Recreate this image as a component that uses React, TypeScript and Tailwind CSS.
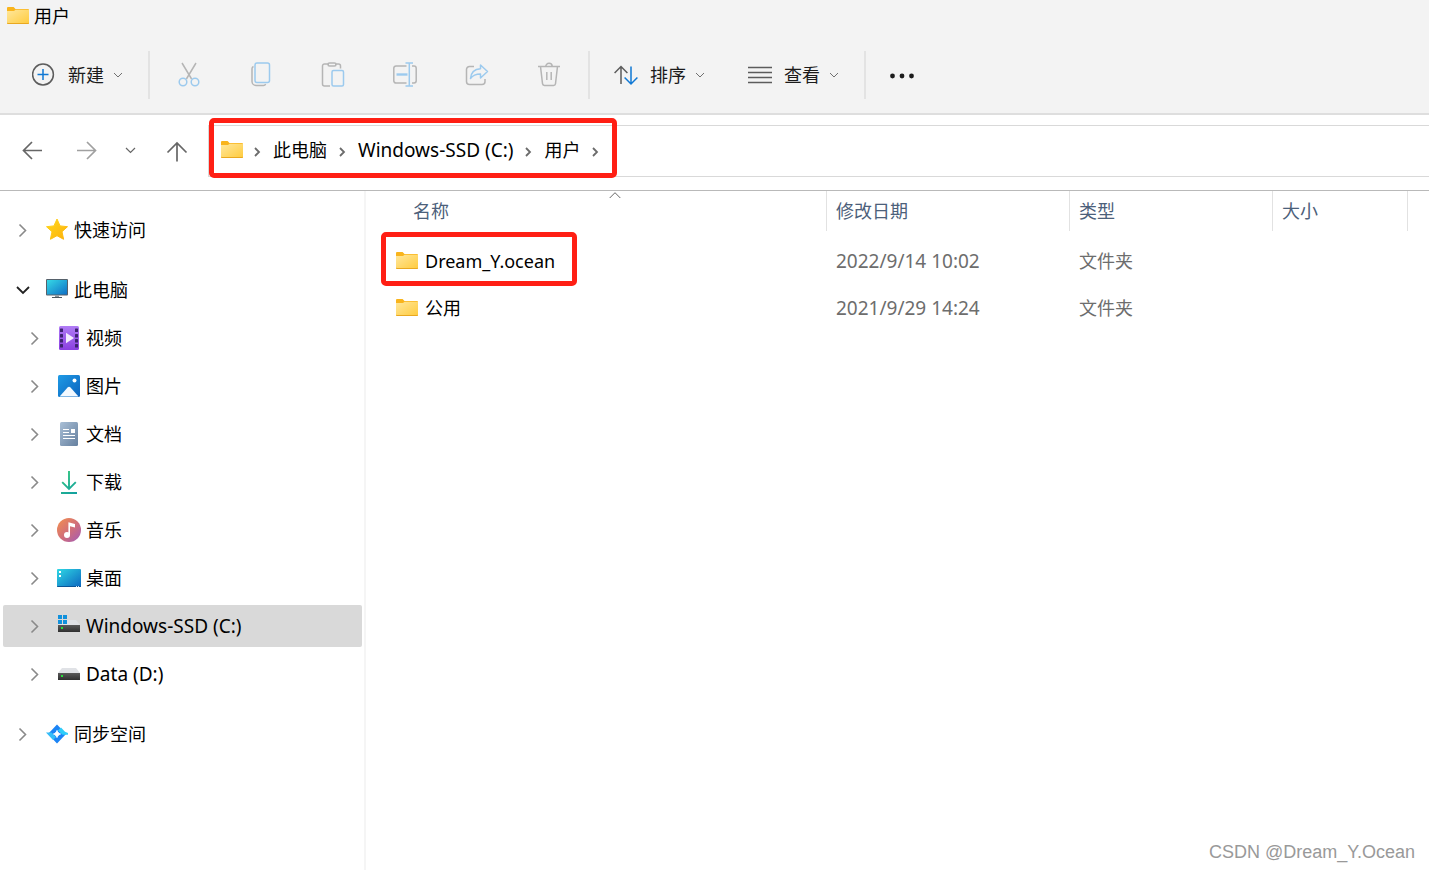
import type { ReactNode } from 'react';
import clsx from 'clsx';

type IconProps = { className?: string };

function FolderIcon() {
  return (
    <svg width="24" height="24" viewBox="0 0 24 24" className="shrink-0" aria-hidden="true">
      <defs>
        <linearGradient id="folder" x1="0" y1="0" x2="1" y2="1">
          <stop offset="0" stopColor="#ffe79c" />
          <stop offset="1" stopColor="#ffcb3d" />
        </linearGradient>
      </defs>
      <path d="M1 4a1 1 0 0 1 1-1h5.6l1.9 2H22a1 1 0 0 1 1 1v3H1z" fill="#f9b41c" />
      <path d="M1 7h7l1.6-1.2H23V19a1 1 0 0 1-1 1H2a1 1 0 0 1-1-1z" fill="url(#folder)" />
      <path d="M1 18.6V19a1 1 0 0 0 1 1h20a1 1 0 0 0 1-1v-.4a1 1 0 0 1-.6.4H1.6a1 1 0 0 1-.6-.4z" fill="#e9a820" />
    </svg>
  );
}

function ChevronDown({ className }: IconProps) {
  return (
    <svg width="12" height="12" viewBox="0 0 12 12" fill="none" stroke="currentColor" className={className} aria-hidden="true">
      <path d="M2 4l4 4 4-4" />
    </svg>
  );
}

function CrumbChevron() {
  return (
    <svg width="12" height="12" viewBox="0 0 12 12" fill="none" stroke="#6b6b6b" strokeWidth="1.8" className="mt-1 shrink-0" aria-hidden="true">
      <path d="M4 2l4 4-4 4" />
    </svg>
  );
}

function TreeChevron({ open }: { open?: boolean }) {
  return (
    <svg
      width="24"
      height="24"
      viewBox="0 0 24 24"
      fill="none"
      stroke={open ? '#222' : '#8a8a8a'}
      strokeWidth={open ? 1.8 : 1.6}
      className="shrink-0"
      aria-hidden="true"
    >
      <path d={open ? 'M6 9l6 6 6-6' : 'M8.500 6.500l6 6-6 6'} />
    </svg>
  );
}

function StarIcon() {
  return (
    <>
      <defs>
        <linearGradient id="star" x1="0" y1="0" x2="1" y2="1">
          <stop offset="0" stopColor="#ffd91f" />
          <stop offset="1" stopColor="#fdb00a" />
        </linearGradient>
      </defs>
      <path
        d="M12 1l3.100 6.900 7.400.8-5.500 5 1.600 7.600L12 17.700l-6.600 3.600L7 13.700l-5.500-5 7.400-.8z"
        fill="url(#star)"
        stroke="url(#star)"
        strokeLinejoin="round"
      />
    </>
  );
}

function ComputerIcon() {
  return (
    <>
      <defs>
        <linearGradient id="screen" x1="0" y1="0" x2="1" y2="1">
          <stop offset="0" stopColor="#35d9e6" />
          <stop offset="1" stopColor="#0f6fc6" />
        </linearGradient>
      </defs>
      <rect x="1" y="1" width="22" height="16.500" rx="1" fill="#56616b" />
      <rect x="2" y="2" width="20" height="14.500" fill="url(#screen)" />
      <path d="M10 17.500h4v1.500h-4z" fill="#8b949b" />
      <path d="M7 19h10v1H7z" fill="#4c565e" />
    </>
  );
}

function VideoIcon() {
  return (
    <>
      <defs>
        <linearGradient id="film" x1="0" y1="0" x2="0" y2="1">
          <stop offset="0" stopColor="#b07cf5" />
          <stop offset="1" stopColor="#8a3fe0" />
        </linearGradient>
      </defs>
      <rect x="2" y="0" width="20" height="24" rx="1.500" fill="url(#film)" />
      {[2.5, 8, 13, 18].map(y => (
        <g key={y} fill="#3d2270">
          <rect x="3" y={y} width="3" height="3.400" rx="0.500" />
          <rect x="18" y={y} width="3" height="3.400" rx="0.500" />
        </g>
      ))}
      <path d="M9 6.800l8 5.200-8 5.200z" fill="#f3ecfd" />
    </>
  );
}

function PictureIcon() {
  return (
    <>
      <defs>
        <linearGradient id="photo" x1="0" y1="0" x2="1" y2="1">
          <stop offset="0" stopColor="#1e9be6" />
          <stop offset="1" stopColor="#0d63bd" />
        </linearGradient>
      </defs>
      <rect x="1" y="1" width="22" height="22" rx="1.500" fill="url(#photo)" />
      <path d="M2.600 22.400l8-8.800a2 2 0 0 1 2.900 0l8 8.800z" fill="#f3f9ff" />
      <circle cx="17.500" cy="6.500" r="2" fill="#fff" />
    </>
  );
}

function DocumentIcon() {
  return (
    <>
      <defs>
        <linearGradient id="doc" x1="0" y1="0" x2="1" y2="1">
          <stop offset="0" stopColor="#a9bfd6" />
          <stop offset="1" stopColor="#66809f" />
        </linearGradient>
      </defs>
      <rect x="3" y="0" width="18" height="24" rx="1.500" fill="url(#doc)" />
      <path d="M6 7.500h6M6 10.500h6M6 13.500h12M6 16.500h12" stroke="#fff" />
      <rect x="14" y="7" width="4" height="4" fill="#fff" />
    </>
  );
}

function DownloadIcon() {
  return (
    <>
      <defs>
        <linearGradient id="down" gradientUnits="userSpaceOnUse" x1="4" y1="1" x2="20" y2="23">
          <stop offset="0" stopColor="#35c97c" />
          <stop offset="1" stopColor="#12a0a0" />
        </linearGradient>
      </defs>
      <path d="M12 1v18M5.200 12.200L12 19l6.800-6.800M4 23h16" fill="none" stroke="url(#down)" strokeWidth="1.900" />
    </>
  );
}

function MusicIcon() {
  return (
    <>
      <defs>
        <linearGradient id="music" x1="0" y1="0" x2="1" y2="1">
          <stop offset="0.1" stopColor="#ee8a55" />
          <stop offset="0.55" stopColor="#cf6d7c" />
          <stop offset="1" stopColor="#a15bb8" />
        </linearGradient>
      </defs>
      <circle cx="12" cy="12" r="12" fill="url(#music)" />
      <circle cx="10" cy="17" r="3" fill="#fff" />
      <path d="M11.400 4.200L18 6v3.600l-5-1.400V17h-1.600z" fill="#fff" />
    </>
  );
}

function DesktopIcon() {
  return (
    <>
      <defs>
        <linearGradient id="desk" x1="0" y1="0" x2="1" y2="1">
          <stop offset="0" stopColor="#2fd8e4" />
          <stop offset="1" stopColor="#0c66c0" />
        </linearGradient>
      </defs>
      <rect x="0" y="3" width="24" height="18" rx="1" fill="url(#desk)" />
      <path d="M2 5h2v2H2zM2 9h2v2H2z" fill="#fff" />
      <path d="M0 20h24a1 1 0 0 1-1 1H1a1 1 0 0 1-1-1z" fill="#0b5596" />
      <path d="M19 20h1v1h-1zM21 20h1v1h-1z" fill="#cfe6f7" />
    </>
  );
}

function DriveShape() {
  return (
    <>
      <defs>
        <linearGradient id="drive" x1="0" y1="0" x2="0" y2="1">
          <stop offset="0" stopColor="#5a5a5a" />
          <stop offset="1" stopColor="#2f2f2f" />
        </linearGradient>
      </defs>
      <path d="M5 6h14l4 5H1z" fill="#e0e2e6" />
      <rect x="1" y="11" width="22" height="7" fill="url(#drive)" />
      <rect x="4" y="13" width="2" height="2" fill="#25e03b" />
    </>
  );
}

function SystemDriveIcon() {
  return (
    <>
      <DriveShape />
      <rect x="1" y="1" width="9" height="9" fill="#d9d9d9" />
      <path d="M1 1h4v4H1zM6 1h4v4H6zM1 6h4v4H1zM6 6h4v4H6z" fill="#1191dc" />
    </>
  );
}

function SyncIcon() {
  return (
    <>
      <path d="M12 2.500L21 12l-9 9.500L3 12z" fill="#1b84f5" strokeLinejoin="round" />
      <path d="M1 10.500h5.500l4.500 4.500-3 3z" fill="#35bdf8" />
      <path d="M23 12.800h-5.500L13 8.500l3-3 4 4.300 3 1.200z" fill="#2fcdf9" />
      <path d="M12 8.500c.7 1.800 1.700 2.800 3.500 3.500-1.800.7-2.800 1.700-3.500 3.500-.7-1.800-1.700-2.800-3.500-3.500 1.800-.7 2.800-1.700 3.500-3.500z" fill="#fff" stroke="#fff" />
    </>
  );
}

type TreeNode = { label: string; icon: ReactNode; open?: boolean; drive?: boolean; selected?: boolean; children?: TreeNode[] };

const TREE: TreeNode[] = [
  { label: '快速访问', icon: <StarIcon /> },
  {
    label: '此电脑',
    icon: <ComputerIcon />,
    open: true,
    children: [
      { label: '视频', icon: <VideoIcon /> },
      { label: '图片', icon: <PictureIcon /> },
      { label: '文档', icon: <DocumentIcon /> },
      { label: '下载', icon: <DownloadIcon /> },
      { label: '音乐', icon: <MusicIcon /> },
      { label: '桌面', icon: <DesktopIcon /> },
      { label: 'Windows-SSD (C:)', icon: <SystemDriveIcon />, drive: true, selected: true },
      { label: 'Data (D:)', icon: <DriveShape />, drive: true },
    ],
  },
  { label: '同步空间', icon: <SyncIcon /> },
];

const FILES = [
  { name: 'Dream_Y.ocean', date: '2022/9/14 10:02', type: '文件夹', marked: true },
  { name: '公用', date: '2021/9/29 14:24', type: '文件夹', marked: false },
];

const CRUMBS = [
  { label: '此电脑' },
  { label: 'Windows-SSD (C:)', drive: true },
  { label: '用户' },
];

const FILE_ACTIONS = [
  {
    label: '剪切',
    icon: (
      <>
        <path d="M5 1l9.600 16M19 1L9.400 17" stroke="#b5b5b5" />
        <circle cx="6" cy="20" r="3.800" />
        <circle cx="18" cy="20" r="3.800" />
      </>
    ),
  },
  {
    label: '复制',
    icon: (
      <>
        <path d="M4.500 4.500a2.500 2.500 0 0 0-1.500 2.500v12.500a4 4 0 0 0 4 4h7.500a2.500 2.500 0 0 0 2.200-1.300" stroke="#b5b5b5" />
        <rect x="6" y="1" width="14.500" height="19.500" rx="2" />
      </>
    ),
  },
  {
    label: '粘贴',
    icon: (
      <>
        <path d="M8 2H3.500a2 2 0 0 0-2 2v18a2 2 0 0 0 2 2H9M14 2h3.500a2 2 0 0 1 2 2v2.500" stroke="#b5b5b5" />
        <rect x="7" y="1" width="8" height="3" rx="1.500" stroke="#b5b5b5" />
        <rect x="11" y="8.500" width="11.500" height="15.500" rx="1.500" />
      </>
    ),
  },
  {
    label: '重命名',
    icon: (
      <>
        <path d="M13.500 4H3a2.200 2.200 0 0 0-2.200 2.200v12.600A2.200 2.200 0 0 0 3 21h10.500M19 4h2a2.200 2.200 0 0 1 2.200 2.200v12.600A2.200 2.200 0 0 1 21 21h-2" stroke="#b5b5b5" />
        <path d="M3.500 12.500h11" strokeWidth="2.400" />
        <path d="M16.300 1v23M12.500 1H20M12.500 24H20" />
      </>
    ),
  },
  {
    label: '共享',
    icon: (
      <>
        <path d="M9 4.500H4.500a3 3 0 0 0-3 3v12a3 3 0 0 0 3 3h12.500a3 3 0 0 0 3-3V17" stroke="#b5b5b5" />
        <path d="M15.500 3l7 6.500-7 6.500v-4c-4.500 0-7.500 1-10 4.500.5-5.500 4-9.500 10-9.800z" strokeLinejoin="round" />
      </>
    ),
  },
  {
    label: '删除',
    icon: (
      <g stroke="#b5b5b5">
        <path d="M1 4.500h22M3.500 4.500l2 17.200a2 2 0 0 0 2 1.800h9a2 2 0 0 0 2-1.800l2-17.200" />
        <path d="M8.800 4.500a3.200 3.200 0 0 1 6.400 0M9.800 10v8M14.200 10v8" />
      </g>
    ),
  },
];

function Divider() {
  return <div className="h-12 w-0.5 shrink-0 bg-[#e3e3e3]" />;
}

function MenuButton({ label, icon }: { label: string; icon: ReactNode }) {
  return (
    <button className="flex shrink-0 items-center">
      <svg width="24" height="24" viewBox="0 0 24 24" fill="none" strokeWidth="1.500" className="mr-3" aria-hidden="true">
        {icon}
      </svg>
      {label}
      <ChevronDown className="ml-2 text-[#707070]" />
    </button>
  );
}

function Toolbar() {
  return (
    <div className="flex h-[79px] items-center border-b-2 border-[#dedede] pl-8 text-[#1b1b1b]">
      <MenuButton
        label="新建"
        icon={
          <>
            <circle cx="11" cy="11.500" r="10.400" stroke="#5c5c5c" />
            <path d="M11 6v11M5.500 11.500h11" stroke="#0f78d4" />
          </>
        }
      />
      <div className="w-6" />
      <Divider />
      <div className="mx-[3px] flex">
        {FILE_ACTIONS.map(action => (
          <button key={action.label} aria-label={action.label} className="flex h-12 w-[72px] items-center justify-center">
            <svg width="24" height="26" viewBox="0 0 24 26" fill="none" stroke="#9ccaee" strokeWidth="1.500" aria-hidden="true">
              {action.icon}
            </svg>
          </button>
        ))}
      </div>
      <Divider />
      <div className="flex gap-[42px] px-6">
        <MenuButton
          label="排序"
          icon={
            <>
              <path d="M7 21V3.500M.6 10L7 3.500l6.400 6.500" stroke="#5c5c5c" />
              <path d="M17 3.500V21M10.600 14.500L17 21l6.400-6.500" stroke="#0f78d4" />
            </>
          }
        />
        <MenuButton label="查看" icon={<path d="M0 4.500h24M0 9.500h24M0 14.500h24M0 19.500h24" stroke="#5c5c5c" />} />
      </div>
      <Divider />
      <button aria-label="查看更多" className="ml-6">
        <svg width="24" height="24" viewBox="0 0 24 24" fill="#1b1b1b" aria-hidden="true">
          <circle cx="2.500" cy="13" r="2.400" />
          <circle cx="12" cy="13" r="2.400" />
          <circle cx="21.500" cy="13" r="2.400" />
        </svg>
      </button>
    </div>
  );
}

function NavButton({ label, children }: { label: string; children: ReactNode }) {
  return (
    <button aria-label={label}>
      <svg width="24" height="24" viewBox="0 0 24 24" fill="none" stroke="#666" strokeWidth="1.700" aria-hidden="true">
        {children}
      </svg>
    </button>
  );
}

function AddressRow() {
  return (
    <div className="flex h-[76px] items-start border-b border-[#b9b9b9] bg-white pt-[10px] pl-5">
      <nav aria-label="导航" className="flex h-[52px] w-[188px] shrink-0 items-center">
        <NavButton label="后退">
          <path d="M22 11.500H3.500M12 3L3.500 11.500 12 20" />
        </NavButton>
        <div className="w-[30px]" />
        <NavButton label="前进">
          <path d="M3 11.500h18.500M13 3l8.500 8.500L13 20" stroke="#a0a0a0" />
        </NavButton>
        <button aria-label="最近浏览的位置" className="mr-7 ml-[27px]">
          <svg width="12" height="12" viewBox="0 0 12 12" fill="none" stroke="#666" strokeWidth="1.200" aria-hidden="true">
            <path d="M1 3L5.500 7.500 10 3" />
          </svg>
        </button>
        <NavButton label="向上">
          <path d="M12 22.500V4M2.500 13.500L12 4l9.500 9.500" />
        </NavButton>
      </nav>
      <div className="flex h-[52px] flex-1 items-center border-y border-l border-[#d9d9d9]">
        <div className="relative flex h-full items-center pr-4 pb-[2px] pl-[11px]">
          <FolderIcon />
          <ol className="flex items-center pl-[7px]">
            <li className="mr-[10px]">
              <CrumbChevron />
            </li>
            {CRUMBS.map(crumb => (
              <li key={crumb.label} className="flex items-center gap-[9px] pr-[10px] whitespace-nowrap last:pr-0">
                <a href="#" className={clsx(crumb.drive && 'text-[19px]')}>
                  {crumb.label}
                </a>
                <CrumbChevron />
              </li>
            ))}
          </ol>
          <div className="pointer-events-none absolute inset-x-0 -top-2 -bottom-[2px] rounded-[5px] border-5 border-[#ff1f14]" />
        </div>
      </div>
    </div>
  );
}

function TreeItem({ node, nested }: { node: TreeNode; nested?: boolean }) {
  return (
    <li>
      <div className="py-[3px]">
        <button
          className={clsx(
            'flex h-[42px] w-full items-center rounded-xs text-left',
            nested ? 'pl-5' : 'pl-2',
            node.drive && 'text-[19px]',
            node.selected && 'bg-[#d9d9d9]'
          )}
        >
          <TreeChevron open={node.open} />
          <svg width="24" height="24" viewBox="0 0 24 24" className="mr-[5px] ml-[10px] shrink-0" aria-hidden="true">
            {node.icon}
          </svg>
          {node.label}
        </button>
      </div>
      {node.children && (
        <ul>
          {node.children.map(child => (
            <TreeItem key={child.label} node={child} nested />
          ))}
        </ul>
      )}
    </li>
  );
}

function Sidebar() {
  return (
    <aside className="w-[366px] shrink-0 border-r-2 border-[#f5f5f5] pt-[15px] pr-[2px] pl-[3px]">
      <ul className="flex flex-col gap-3">
        {TREE.map(node => (
          <TreeItem key={node.label} node={node} />
        ))}
      </ul>
    </aside>
  );
}

function HeaderCell({ children }: { children?: ReactNode }) {
  return (
    <th className="p-0 pb-[6px] font-normal">
      <div className="flex h-10 items-center border-l border-[#e2e2e2] pl-[9px]">{children}</div>
    </th>
  );
}

function FileTable() {
  return (
    <main className="min-w-0 flex-1">
      <table className="w-full table-fixed text-left text-[#6d6d6d]">
        <colgroup>
          <col className="w-[460px]" />
          <col className="w-[243px]" />
          <col className="w-[203px]" />
          <col className="w-[135px]" />
          <col />
        </colgroup>
        <thead className="text-[#4c607a]">
          <tr>
            <th className="p-0 pb-[6px] pl-[38px] font-normal">
              <div className="relative flex h-10 items-center pl-[9px]">
                名称
                <svg
                  width="12"
                  height="8"
                  viewBox="0 0 12 8"
                  fill="none"
                  stroke="#666"
                  className="absolute top-0 left-1/2 -translate-x-1/2"
                  aria-hidden="true"
                >
                  <path d="M.7 7L6 1.700 11.300 7" />
                </svg>
              </div>
            </th>
            <HeaderCell>修改日期</HeaderCell>
            <HeaderCell>类型</HeaderCell>
            <HeaderCell>大小</HeaderCell>
            <HeaderCell />
          </tr>
        </thead>
        <tbody>
          {FILES.map(file => (
            <tr key={file.name} className="h-[47px]">
              <td className="p-0 pl-[15px] text-black">
                <div className="relative inline-flex h-[47px] items-center gap-[6px] pr-[22px] pl-[14px]">
                  <FolderIcon />
                  {file.name}
                  {file.marked && (
                    <div className="pointer-events-none absolute inset-x-0 -top-[5px] -bottom-[2px] rounded-[5px] border-5 border-[#ff1f14]" />
                  )}
                </div>
              </td>
              <td className="p-0 pl-[10px] text-[19px]">{file.date}</td>
              <td className="p-0 pl-[10px]">{file.type}</td>
              <td />
              <td />
            </tr>
          ))}
        </tbody>
      </table>
    </main>
  );
}

export default function App() {
  return (
    <div className="relative flex min-h-screen flex-col bg-white font-['Noto_Sans','Noto_Sans_CJK_SC',sans-serif] text-[18px] leading-6 text-black">
      <header className="bg-[#f3f3f3]">
        <div className="flex h-9 items-start gap-1 pt-1 pl-[6px]">
          <FolderIcon />
          <h1>用户</h1>
        </div>
        <Toolbar />
      </header>
      <AddressRow />
      <div className="flex flex-1">
        <Sidebar />
        <FileTable />
      </div>
      <div className="absolute right-[14px] bottom-[6px] font-['Liberation_Sans',sans-serif] text-[18px] text-[#999]">
        CSDN @Dream_Y.Ocean
      </div>
    </div>
  );
}
